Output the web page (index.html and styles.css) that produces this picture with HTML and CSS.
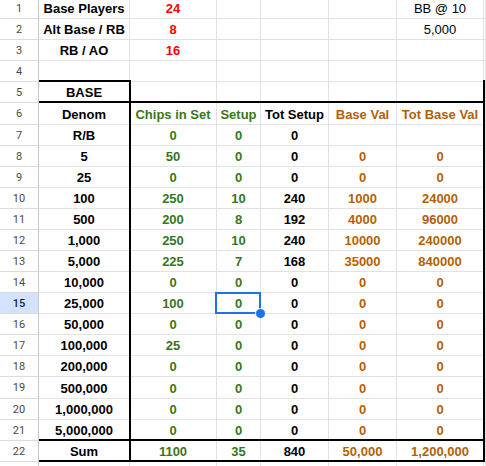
FILE: index.html
```html
<!DOCTYPE html>
<html>
<head>
<meta charset="utf-8">
<link rel="stylesheet" href="styles.css">
</head>
<body>
<div class="sheet">
  <div class="layer cells">
    <div class="rh">1</div><div class="c b">Base Players</div><div class="c b red">24</div><div class="c"></div><div class="c"></div><div class="c"></div><div class="c">BB @ 10</div><div class="c"></div>
    <div class="rh">2</div><div class="c b">Alt Base / RB</div><div class="c b red">8</div><div class="c"></div><div class="c"></div><div class="c"></div><div class="c">5,000</div><div class="c"></div>
    <div class="rh">3</div><div class="c b">RB / AO</div><div class="c b red">16</div><div class="c"></div><div class="c"></div><div class="c"></div><div class="c"></div><div class="c"></div>
    <div class="rh">4</div><div class="c"></div><div class="c"></div><div class="c"></div><div class="c"></div><div class="c"></div><div class="c"></div><div class="c"></div>
    <div class="rh">5</div><div class="c b">BASE</div><div class="c"></div><div class="c"></div><div class="c"></div><div class="c"></div><div class="c"></div><div class="c"></div>
    <div class="rh">6</div><div class="c b">Denom</div><div class="c b grn">Chips in Set</div><div class="c b grn">Setup</div><div class="c b">Tot Setup</div><div class="c b org">Base Val</div><div class="c b org">Tot Base Val</div><div class="c"></div>
    <div class="rh">7</div><div class="c b">R/B</div><div class="c b grn">0</div><div class="c b grn">0</div><div class="c b">0</div><div class="c"></div><div class="c"></div><div class="c"></div>
    <div class="rh">8</div><div class="c b">5</div><div class="c b grn">50</div><div class="c b grn">0</div><div class="c b">0</div><div class="c b org">0</div><div class="c b org">0</div><div class="c"></div>
    <div class="rh">9</div><div class="c b">25</div><div class="c b grn">0</div><div class="c b grn">0</div><div class="c b">0</div><div class="c b org">0</div><div class="c b org">0</div><div class="c"></div>
    <div class="rh">10</div><div class="c b">100</div><div class="c b grn">250</div><div class="c b grn">10</div><div class="c b">240</div><div class="c b org">1000</div><div class="c b org">24000</div><div class="c"></div>
    <div class="rh">11</div><div class="c b">500</div><div class="c b grn">200</div><div class="c b grn">8</div><div class="c b">192</div><div class="c b org">4000</div><div class="c b org">96000</div><div class="c"></div>
    <div class="rh">12</div><div class="c b">1,000</div><div class="c b grn">250</div><div class="c b grn">10</div><div class="c b">240</div><div class="c b org">10000</div><div class="c b org">240000</div><div class="c"></div>
    <div class="rh">13</div><div class="c b">5,000</div><div class="c b grn">225</div><div class="c b grn">7</div><div class="c b">168</div><div class="c b org">35000</div><div class="c b org">840000</div><div class="c"></div>
    <div class="rh">14</div><div class="c b">10,000</div><div class="c b grn">0</div><div class="c b grn">0</div><div class="c b">0</div><div class="c b org">0</div><div class="c b org">0</div><div class="c"></div>
    <div class="rh rh-sel">15</div><div class="c b">25,000</div><div class="c b grn">100</div><div class="c b grn">0</div><div class="c b">0</div><div class="c b org">0</div><div class="c b org">0</div><div class="c"></div>
    <div class="rh">16</div><div class="c b">50,000</div><div class="c b grn">0</div><div class="c b grn">0</div><div class="c b">0</div><div class="c b org">0</div><div class="c b org">0</div><div class="c"></div>
    <div class="rh">17</div><div class="c b">100,000</div><div class="c b grn">25</div><div class="c b grn">0</div><div class="c b">0</div><div class="c b org">0</div><div class="c b org">0</div><div class="c"></div>
    <div class="rh">18</div><div class="c b">200,000</div><div class="c b grn">0</div><div class="c b grn">0</div><div class="c b">0</div><div class="c b org">0</div><div class="c b org">0</div><div class="c"></div>
    <div class="rh">19</div><div class="c b">500,000</div><div class="c b grn">0</div><div class="c b grn">0</div><div class="c b">0</div><div class="c b org">0</div><div class="c b org">0</div><div class="c"></div>
    <div class="rh">20</div><div class="c b">1,000,000</div><div class="c b grn">0</div><div class="c b grn">0</div><div class="c b">0</div><div class="c b org">0</div><div class="c b org">0</div><div class="c"></div>
    <div class="rh">21</div><div class="c b">5,000,000</div><div class="c b grn">0</div><div class="c b grn">0</div><div class="c b">0</div><div class="c b org">0</div><div class="c b org">0</div><div class="c"></div>
    <div class="rh">22</div><div class="c b">Sum</div><div class="c b grn">1100</div><div class="c b grn">35</div><div class="c b">840</div><div class="c b org">50,000</div><div class="c b org">1,200,000</div><div class="c"></div>
    <div class="rh"></div><div class="c"></div><div class="c"></div><div class="c"></div><div class="c"></div><div class="c"></div><div class="c"></div><div class="c"></div>
  </div>
  <div class="layer overlay">
    <div class="frame frame-outer"></div>
    <div class="frame frame-denom"></div>
    <div class="frame frame-head"></div>
    <div class="frame frame-sum"></div>
    <div class="selection"></div>
  </div>
</div>
</body>
</html>
```
FILE: styles.css
```css
html, body {
  margin: 0;
  padding: 0;
  background: #ffffff;
  overflow: hidden;
}

.sheet {
  display: grid;
  margin-top: -2px;
  font-family: "Liberation Sans", Arial, sans-serif;
  font-size: 13px;
  color: #000000;
}

.layer {
  grid-area: 1 / 1;
  display: grid;
  grid-template-columns: 39px 91px 87px 44px 68px 68px 87px 1fr;
  grid-template-rows: repeat(5, 21px) 22px repeat(12, 21px) 22px repeat(4, 21px);
}

.overlay {
  z-index: 1;
  pointer-events: none;
}

.c {
  box-sizing: border-box;
  border-right: 1px solid #e2e2e2;
  border-bottom: 1px solid #e2e2e2;
  display: flex;
  align-items: flex-end;
  justify-content: center;
  line-height: 16px;
  padding-bottom: 1px;
  white-space: nowrap;
  overflow: hidden;
}

.rh {
  box-sizing: border-box;
  border-right: 1px solid #c4c7c5;
  border-bottom: 1px solid #dcdcdc;
  display: flex;
  align-items: center;
  justify-content: center;
  font-family: Roboto, "Liberation Sans", Arial, sans-serif;
  font-size: 11px;
  color: #4a4a4a;
}

.rh-sel {
  background: #d3e3fd;
  color: #0b1f45;
  font-weight: 500;
}

.b { font-weight: bold; }
.red { color: #ff0000; }
.grn { color: #38761d; }
.org { color: #b45f06; }

.frame {
  box-sizing: border-box;
}

.frame-outer {
  grid-row: 5 / 23;
  grid-column: 2 / 8;
  margin: -2px -1px 0 0;
  border-right: 2px solid #000;
  border-bottom: 2px solid #000;
}

.frame-denom {
  grid-row: 5 / 23;
  grid-column: 2 / 3;
  margin: -2px -1px 0 0;
  border-top: 2px solid #000;
  border-right: 2px solid #000;
}

.frame-head {
  grid-row: 5 / 6;
  grid-column: 2 / 8;
  margin-right: -1px;
  border-bottom: 2px solid #000;
}

.frame-sum {
  grid-row: 21 / 22;
  grid-column: 2 / 8;
  margin-right: -1px;
  border-bottom: 2px solid #000;
}

.selection {
  grid-row: 15 / 16;
  grid-column: 4 / 5;
  margin: -1px 0 0 -2px;
  box-sizing: border-box;
  border: 2px solid #1a73e8;
  position: relative;
}

.selection::after {
  content: "";
  position: absolute;
  right: -7px;
  bottom: -7px;
  width: 9px;
  height: 9px;
  border: 1px solid #ffffff;
  border-radius: 50%;
  background: #1a73e8;
}
```
